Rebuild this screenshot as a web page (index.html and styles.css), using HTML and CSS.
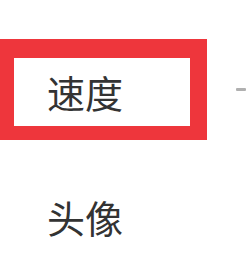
FILE: index.html
```html
<!DOCTYPE html>
<html lang="zh">
<head>
<meta charset="utf-8">
<link rel="stylesheet" href="styles.css">
</head>
<body>
<div class="list">
  <div class="row row-speed">
    <div class="highlight">
      <span class="label">速度</span>
    </div>
    <div class="track"></div>
  </div>
  <div class="row row-avatar">
    <span class="label">头像</span>
  </div>
</div>
</body>
</html>
```
FILE: styles.css
```css
html, body {
  margin: 0;
  padding: 0;
  background: #ffffff;
}
body {
  width: 246px;
  height: 260px;
  overflow: hidden;
  font-family: "Noto Sans CJK SC", "Noto Sans", sans-serif;
}
.list {
  display: flex;
  flex-direction: column;
  padding-top: 39px;
}
.row {
  display: flex;
  align-items: center;
}
.row-speed {
  height: 101px;
}
.highlight {
  box-sizing: border-box;
  width: 207px;
  height: 101px;
  border-style: solid;
  border-color: #ee363c;
  border-width: 19px 17px 14px 14px;
  display: flex;
  align-items: center;
  padding-left: 33px;
}
.label {
  font-size: 38px;
  line-height: 1;
  color: #333333;
}
.track {
  margin-left: 29px;
  width: 10px;
  height: 3px;
  background: #b0b0b0;
  border-radius: 1px;
}
.row-avatar {
  padding-top: 58px;
  padding-left: 47px;
}
```
